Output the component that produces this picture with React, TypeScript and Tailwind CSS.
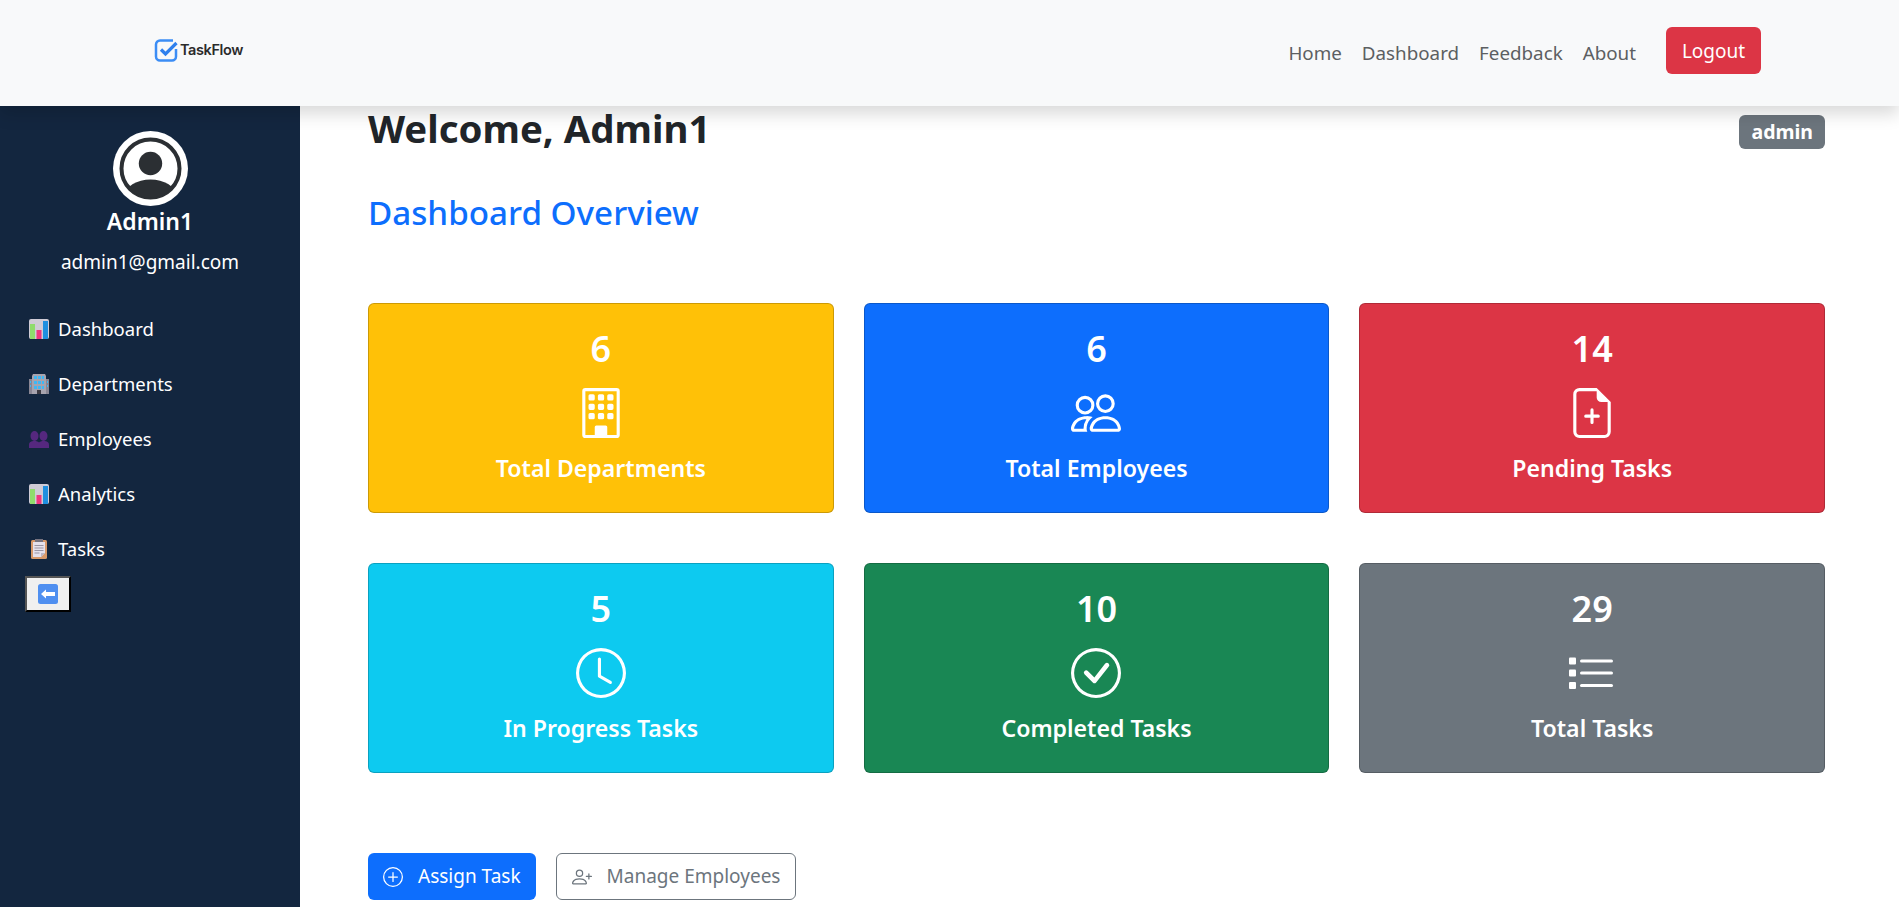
import React from "react";
import { BsBuilding, BsPeople, BsFileEarmarkPlus, BsClock, BsCheckCircle, BsPlusCircle, BsPersonPlus } from "react-icons/bs";

const Chart = () => (
  <svg width="20" height="20" viewBox="0 0 20 20"><rect width="20" height="20" rx="2" fill="#cfcbd6" /><rect x="1" y="5" width="5" height="15" fill="#8fdc6c" /><rect x="7.500" y="11" width="5" height="9" fill="#f0367e" /><rect x="14" y="2" width="5" height="18" fill="#1f8fe0" /></svg>
);
const Office = () => (
  <svg width="20" height="20" viewBox="0 0 20 20"><path d="M4 0h12l1 2v18H3V2z" fill="#a7a3ae" /><path d="M0 5h3v15H0zM17 5h3v15h-3z" fill="#8a8693" /><g fill="#3fb8f5"><rect x="5" y="2" width="3" height="3" /><rect x="9" y="2" width="3" height="3" /><rect x="13" y="2" width="2" height="3" /><rect x="5" y="7" width="3" height="3" /><rect x="9" y="7" width="3" height="3" /><rect x="13" y="7" width="2" height="3" /><rect x="5" y="12" width="3" height="3" /><rect x="9" y="12" width="3" height="3" /><rect x="13" y="12" width="2" height="3" /><rect x="1" y="7" width="1" height="2" /><rect x="18" y="7" width="1" height="2" /><rect x="1" y="11" width="1" height="2" /><rect x="18" y="11" width="1" height="2" /></g><rect x="8" y="16" width="4" height="4" fill="#3d3a42" /></svg>
);
const People = () => (
  <svg width="20" height="20" viewBox="0 0 20 20" fill="#55287f"><ellipse cx="5.500" cy="7" rx="4" ry="5" /><ellipse cx="14.500" cy="7" rx="4" ry="5" /><path d="M0 19v-3c0-3 2-4 5.500-4 2 0 3.500.5 4.500 1.500 1-1 2.500-1.500 4.500-1.500 3.500 0 5.500 1 5.500 4v3z" /></svg>
);
const Clipboard = () => (
  <svg width="20" height="20" viewBox="0 0 20 20"><rect x="2" y="1" width="16" height="19" rx="1.500" fill="#d8996a" /><path d="M4 3h12v11l-4 4H4z" fill="#e6e1ec" /><path d="M16 14h-4v4z" fill="#bdb8c6" /><rect x="6" y="0" width="8" height="3" fill="#77737f" /><path d="M5.500 6.500h9M5.500 9h9M5.500 11.500h9M5.500 14h5" stroke="#9a95a5" strokeWidth="1" /></svg>
);
const BackArrow = () => (
  <svg width="20" height="20" viewBox="0 0 20 20"><rect width="20" height="20" rx="2.500" fill="#4f8ff0" /><path d="M3 10l5-4.500V8h9v4H8v2.500z" fill="#fff" /></svg>
);
const Avatar = () => (
  <svg width="75" height="75" viewBox="0 0 75 75">
    <defs><clipPath id="avatar-clip"><circle cx="37.500" cy="37.500" r="29" /></clipPath></defs>
    <circle cx="37.500" cy="37.500" r="37.500" fill="#fff" />
    <circle cx="37.500" cy="37.500" r="29" fill="none" stroke="#2b2f33" strokeWidth="4" />
    <circle cx="37.500" cy="32.500" r="11.700" fill="#2b2f33" />
    <ellipse cx="37.500" cy="64" rx="25" ry="15.500" fill="#2b2f33" clipPath="url(#avatar-clip)" />
  </svg>
);
const ListIcon = ({ size = 50, className = "" }: { size?: number; className?: string }) => (
  <svg width={size} height={size} viewBox="0 0 50 50" fill="currentColor" className={className}>
    <rect x="2" y="9.500" width="7" height="7" rx="1" />
    <rect x="2" y="21.500" width="7" height="7" rx="1" />
    <rect x="2" y="34" width="7" height="7" rx="1" />
    <rect x="13" y="11.500" width="33" height="3" rx="1.500" />
    <rect x="13" y="23.500" width="33" height="3" rx="1.500" />
    <rect x="13" y="36" width="33" height="3" rx="1.500" />
  </svg>
);

const navItems = [
  { label: "Dashboard", icon: <Chart /> },
  { label: "Departments", icon: <Office /> },
  { label: "Employees", icon: <People /> },
  { label: "Analytics", icon: <Chart /> },
  { label: "Tasks", icon: <Clipboard /> },
];

const cards = [
  { n: "6", label: "Total Departments", bg: "bg-[#ffc107]", Icon: BsBuilding },
  { n: "6", label: "Total Employees", bg: "bg-[#0d6efd]", Icon: BsPeople },
  { n: "14", label: "Pending Tasks", bg: "bg-[#dc3545]", Icon: BsFileEarmarkPlus },
  { n: "5", label: "In Progress Tasks", bg: "bg-[#0dcaf0]", Icon: BsClock },
  { n: "10", label: "Completed Tasks", bg: "bg-[#198754]", Icon: BsCheckCircle },
  { n: "29", label: "Total Tasks", bg: "bg-[#6c757d]", Icon: ListIcon },
];

export default function App() {
  return (
    <div className="h-[907px] overflow-hidden bg-white text-[#212529] font-['Noto_Sans','Open_Sans',sans-serif]">
      <header className="relative z-10 flex h-[106px] items-center justify-between bg-[#f8f9fa] pl-[154px] pr-[138px] shadow-[0_8px_16px_rgba(0,0,0,0.15)]">
        <div className="-mt-[7px] flex items-center gap-[2px]">
          <svg width="24" height="24" viewBox="0 0 24 24" fill="none"><path d="M19 2.500H6A4 4 0 0 0 2 6.500v12a4 4 0 0 0 4 4h12a4 4 0 0 0 4-4V11" stroke="#3b8df5" strokeWidth="2.500" /><path d="M7 11.500l4.500 4.500L22.500 5" stroke="#2f80ed" strokeWidth="3.200" /></svg>
          <span className="font-['Inter',sans-serif] text-[14.500px] font-semibold tracking-[-0.4px] text-[#2b2b2b]">TaskFlow</span>
        </div>
        <nav className="flex items-center text-[#5c5f62]">
          <div className="flex items-center gap-[20px] pt-[1px] text-[18.800px]">
            <span>Home</span><span>Dashboard</span><span>Feedback</span><span>About</span>
          </div>
          <button className="ml-[30px] -mt-[5px] h-[47px] w-[95px] rounded-[6px] bg-[#dc3545] pt-[2px] text-[19px] text-white">Logout</button>
        </nav>
      </header>
      <div className="flex h-[801px]">
        <aside className="w-[300px] shrink-0 bg-[#13263f] text-white">
          <div className="flex flex-col items-center pt-[25px]">
            <Avatar />
            <div className="-mt-[3px] text-[23px] font-semibold leading-[36px]">Admin1</div>
            <div className="mt-[10px] text-[19px] leading-[27px]">admin1@gmail.com</div>
          </div>
          <ul className="mt-[25px] flex flex-col text-[18.500px]">
            {navItems.map((item) => (
              <li key={item.label} className="flex h-[55px] items-center gap-[9px] pl-[29px]">{item.icon}<span>{item.label}</span></li>
            ))}
          </ul>
          <button className="ml-[25px] flex h-[36px] w-[46px] items-center justify-center border-2 border-t-[#555] border-l-[#555] border-r-black border-b-black bg-[#f0f0f0]"><BackArrow /></button>
        </aside>
        <main className="min-w-0 flex-1 pl-[68px] pr-[74px]">
          <div className="flex h-[45px] items-start justify-between">
            <h1 className="-mt-[2px] text-[38.400px] font-bold leading-[48px]">Welcome, Admin1</h1>
            <span className="mt-[9px] rounded-[6px] bg-[#6c757d] px-[12px] py-[5px] text-[19.500px] font-bold leading-[24px] text-white">admin</span>
          </div>
          <h2 className="mt-[43px] text-[33.200px] font-medium leading-[38px] text-[#0d6efd]">Dashboard Overview</h2>
          <div className="mt-[71px] grid grid-cols-3 gap-x-[30px] gap-y-[50px]">
            {cards.map(({ n, label, bg, Icon }) => (
              <div key={label} className={`${bg} flex h-[210px] flex-col items-center rounded-[6px] border border-black/20 pt-[21px] text-white`}>
                <div className="text-[36px] font-semibold leading-[48px]">{n}</div>
                <Icon size={50} className="mt-[15px] text-white" />
                <div className="mt-[12px] text-[23.100px] font-semibold leading-[36px]">{label}</div>
              </div>
            ))}
          </div>
          <div className="mt-[80px] flex gap-[20px] text-[19px]">
            <button className="flex h-[47px] items-center gap-[15px] rounded-[6px] bg-[#0d6efd] px-[15px] text-white"><BsPlusCircle size={20} />Assign Task</button>
            <button className="flex h-[47px] items-center gap-[15px] rounded-[6px] border border-[#6c757d] px-[15px] text-[#6c757d]"><BsPersonPlus size={20} />Manage Employees</button>
          </div>
        </main>
      </div>
    </div>
  );
}
